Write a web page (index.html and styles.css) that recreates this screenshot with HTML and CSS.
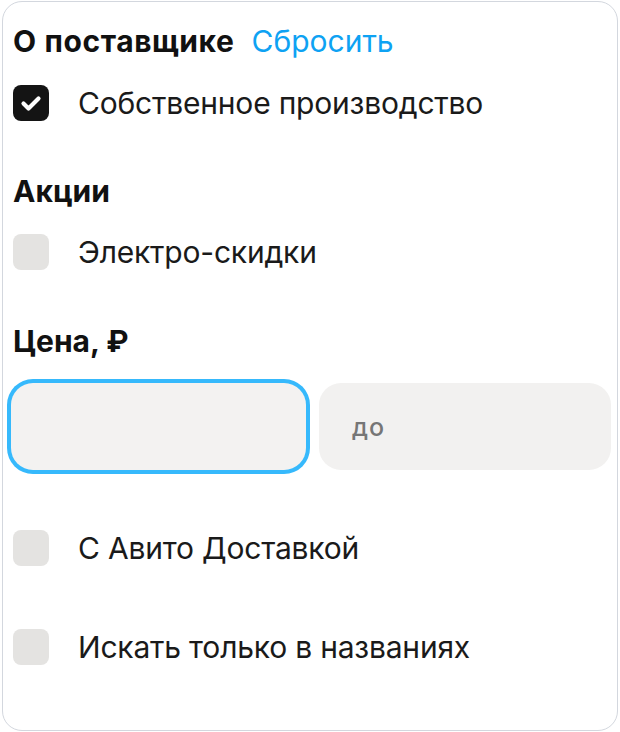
FILE: index.html
```html
<!DOCTYPE html>
<html lang="ru">
<head>
<meta charset="utf-8">
<link rel="stylesheet" href="styles.css">
</head>
<body>
<div class="card">
  <div class="head">
    <span class="title">О поставщике</span>
    <span class="reset">Сбросить</span>
  </div>
  <div class="row row-first">
    <span class="box box-on">
      <svg width="36" height="36" viewBox="0 0 36 36"><path d="M10.5 18.5 L15.5 23.5 L25.5 13.5" fill="none" stroke="#fff" stroke-width="4.2" stroke-linecap="round" stroke-linejoin="round"/></svg>
    </span>
    <span class="label">Собственное производство</span>
  </div>
  <div class="section">Акции</div>
  <div class="row row-after-section">
    <span class="box"></span>
    <span class="label">Электро-скидки</span>
  </div>
  <div class="section section-price">Цена, ₽</div>
  <div class="inputs">
    <div class="input input-focus"></div>
    <div class="input"><span class="ph">до</span></div>
  </div>
  <div class="row row-delivery">
    <span class="box"></span>
    <span class="label">С Авито Доставкой</span>
  </div>
  <div class="row row-titles">
    <span class="box"></span>
    <span class="label">Искать только в названиях</span>
  </div>
</div>
</body>
</html>
```
FILE: styles.css
```css
html, body {
  margin: 0;
  padding: 0;
  background: #ffffff;
}
body {
  font-family: Inter, "Noto Sans", sans-serif;
  color: #141414;
}
.card {
  margin: 1px 2px;
  width: 616px;
  height: 730px;
  box-sizing: border-box;
  border: 1.5px solid #d3d7de;
  border-radius: 20px;
  padding: 21px 7px 0 10px;
  background: #fff;
}
.head {
  display: flex;
  align-items: baseline;
  gap: 17px;
  height: 36px;
  line-height: 36px;
}
.title {
  font-weight: 700;
  font-size: 30px;
  letter-spacing: 0.6px;
  color: #111;
}
.reset {
  font-size: 30px;
  color: #0ea2f3;
}
.row {
  display: flex;
  align-items: center;
  height: 37px;
}
.row-first { margin-top: 25px; }
.row-after-section { margin-top: 24px; }
.row-delivery { margin-top: 59px; }
.row-titles { margin-top: 62px; }
.box {
  width: 36px;
  height: 36px;
  border-radius: 8px;
  background: #e4e3e1;
  flex: none;
  display: flex;
}
.box-on {
  background: #141414;
}
.label {
  margin-left: 29px;
  font-size: 30px;
  line-height: 36px;
  letter-spacing: -0.2px;
  color: #1a1a1a;
}
.section {
  margin-top: 52px;
  font-size: 30px;
  font-weight: 700;
  line-height: 36px;
  color: #111;
}
.section-price { margin-top: 53px; }
.inputs {
  margin-top: 24px;
  margin-left: -2px;
  display: grid;
  grid-template-columns: 295px 292px;
  gap: 13px;
}
.input {
  height: 87px;
  border-radius: 22px;
  background: #f2f1f0;
  display: flex;
  align-items: center;
  padding-left: 33px;
  box-sizing: border-box;
}
.input-focus {
  box-shadow: 0 0 0 4px #36b9fc;
  background: #f3f2f1;
}
.ph {
  font-size: 25px;
  font-weight: 500;
  letter-spacing: 1px;
  color: #767676;
}
```
